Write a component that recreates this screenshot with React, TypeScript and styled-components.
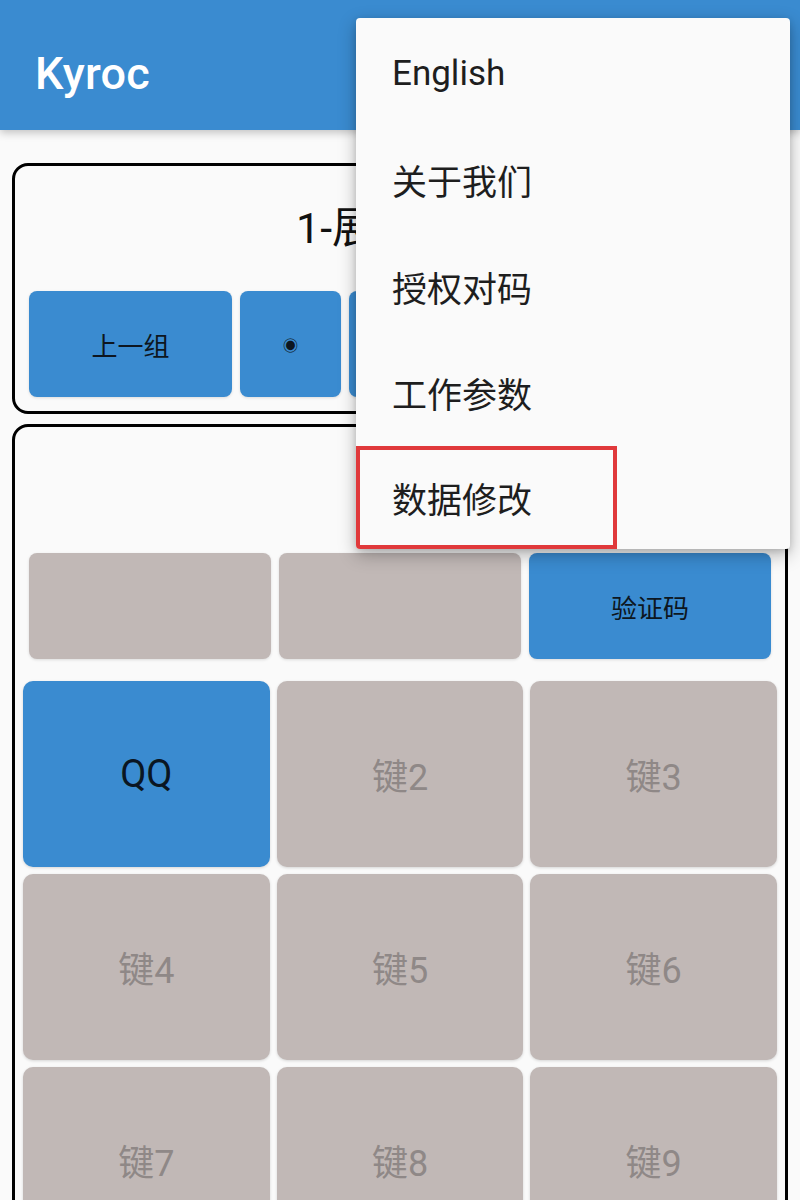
import React from 'react';
import styled, { createGlobalStyle } from 'styled-components';

const GlobalStyle = createGlobalStyle`
    html, body {
        margin: 0;
        padding: 0;
        background: #fafafa;
    }
    #root {
        height: 1200px;
        overflow: hidden;
        position: relative;
    }
    * {
        box-sizing: border-box;
    }
`;

const BLUE = '#3a8bd0';
const GREY = '#c1b8b6';
const FONT = `Roboto, "Noto Sans CJK SC", sans-serif`;

const Page = styled.div`
    position: relative;
    min-height: 1200px;
    background: #fafafa;
    font-family: ${FONT};
`;

const AppBar = styled.header`
    height: 130px;
    background: ${BLUE};
    display: flex;
    align-items: center;
    padding: 16px 0 0 35px;
    box-shadow: 0 3px 8px rgba(0, 0, 0, 0.22);
    position: relative;
    z-index: 1;
`;

const Title = styled.h1`
    margin: 0;
    color: #fff;
    font-size: 45px;
    font-weight: 500;
    letter-spacing: 0.2px;
`;

const Body = styled.main`
    display: flex;
    flex-direction: column;
    gap: 10px;
    padding: 33px 12px 0;
`;

const Card = styled.section`
    border: 3.5px solid #000;
    border-radius: 16px;
    background: #fafafa;
`;

const GroupTitle = styled.div`
    margin: 38px 0 39px;
    text-align: center;
    font-size: 43px;
    line-height: 48px;
    color: #111;
`;

const ButtonRow = styled.div<{ $last?: boolean }>`
    display: flex;
    gap: 8px;
    padding: 0 14px ${p => (p.$last ? 14 : 0)}px;
`;

const Btn = styled.button<{ $grow?: number; $tone?: 'blue' | 'grey' }>`
    flex: ${p => p.$grow ?? 1} 1 0;
    height: 106px;
    border: none;
    border-radius: 8px;
    background: ${p => (p.$tone === 'grey' ? GREY : BLUE)};
    color: #0d1620;
    font-family: ${FONT};
    font-size: 26px;
    box-shadow: 0 1px 3px rgba(0, 0, 0, 0.12);
    display: flex;
    align-items: center;
    justify-content: center;
    padding: 0;
`;

const Dot = styled.span`
    font-size: 15px;
`;

const KeysHeader = styled.div`
    height: 126px;
`;

const KeyGrid = styled.div`
    display: grid;
    grid-template-columns: repeat(3, 1fr);
    grid-auto-rows: 186px;
    gap: 7px;
    padding: 22px 8px 8px;
`;

const Key = styled.button<{ $active?: boolean }>`
    border: none;
    border-radius: 10px;
    background: ${p => (p.$active ? BLUE : GREY)};
    color: ${p => (p.$active ? '#0a1622' : '#8f8887')};
    font-family: ${FONT};
    font-size: ${p => (p.$active ? 38 : 36)}px;
    box-shadow: 0 1px 3px rgba(0, 0, 0, 0.15);
    padding: 0;
`;

const Menu = styled.ul`
    position: absolute;
    top: 18px;
    left: 356px;
    width: 434px;
    height: 531px;
    margin: 0;
    padding: 2px 0 0;
    list-style: none;
    background: #fafafa;
    border-radius: 4px;
    box-shadow: 0 6px 18px rgba(0, 0, 0, 0.28), 0 2px 6px rgba(0, 0, 0, 0.12);
    overflow: hidden;
    z-index: 5;
`;

const MenuItem = styled.li<{ $marked?: boolean }>`
    height: ${p => (p.$marked ? 103 : 106.5)}px;
    width: ${p => (p.$marked ? '261px' : '100%')};
    display: flex;
    align-items: center;
    padding-left: ${p => (p.$marked ? 32 : 36)}px;
    border: ${p => (p.$marked ? '4px solid #e0393b' : 'none')};
    font-size: 35px;
    color: #1e1e1e;
`;

const menuItems = ['English', '关于我们', '授权对码', '工作参数', '数据修改'];
const keys = ['QQ', '键2', '键3', '键4', '键5', '键6', '键7', '键8', '键9'];

export default function App() {
    return (
        <Page>
            <GlobalStyle />
            <AppBar>
                <Title>Kyroc</Title>
            </AppBar>
            <Body>
                <Card>
                    <GroupTitle>1-展厅一组</GroupTitle>
                    <ButtonRow $last>
                        <Btn $grow={2}>上一组</Btn>
                        <Btn><Dot>◉</Dot></Btn>
                        <Btn><Dot>◉</Dot></Btn>
                        <Btn><Dot>◉</Dot></Btn>
                        <Btn $grow={2}>下一组</Btn>
                    </ButtonRow>
                </Card>
                <Card>
                    <KeysHeader />
                    <ButtonRow>
                        <Btn $tone="grey" />
                        <Btn $tone="grey" />
                        <Btn>验证码</Btn>
                    </ButtonRow>
                    <KeyGrid>
                        {keys.map((k, i) => (
                            <Key key={k} $active={i === 0}>{k}</Key>
                        ))}
                    </KeyGrid>
                </Card>
            </Body>
            <Menu>
                {menuItems.map((m, i) => (
                    <MenuItem key={m} $marked={i === menuItems.length - 1}>{m}</MenuItem>
                ))}
            </Menu>
        </Page>
    );
}
